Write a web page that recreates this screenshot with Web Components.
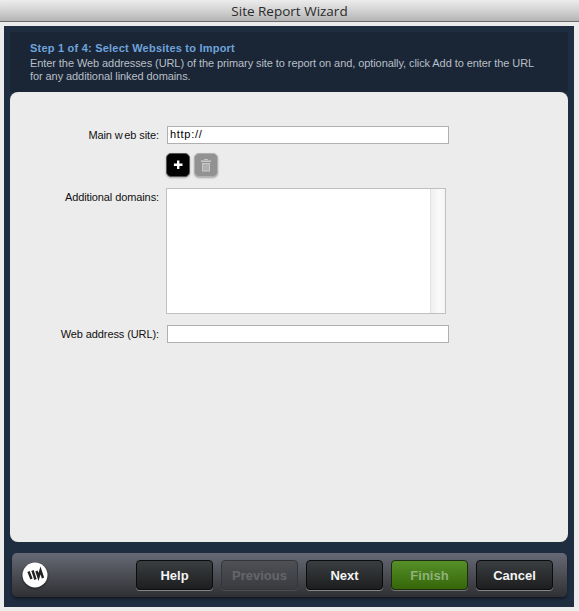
<!DOCTYPE html>
<html>
<head>
<meta charset="utf-8">
<title>Site Report Wizard</title>
<style>
html, body { margin: 0; padding: 0; background: #ececec; }
body { font-family: "Liberation Sans", Arial, sans-serif; font-size: 11px; }
</style>
</head>
<body>
<wizard-window heading="Site Report Wizard">
  <wizard-header slot="header" step="Step 1 of 4: Select Websites to Import">Enter the Web addresses (URL) of the primary site to report on and, optionally, click Add to enter the URL for any additional linked domains.</wizard-header>
  <form-row><span slot="label">Main <span style="letter-spacing:1.6px">w</span>eb site:</span><text-box value="http://"></text-box></form-row>
  <form-row gap="9"><div style="display:flex;gap:4px;margin-left:-1px"><icon-button kind="add"></icon-button><icon-button kind="trash"></icon-button></div></form-row>
  <form-row gap="11"><span slot="label">Additional domains:</span><list-box></list-box></form-row>
  <form-row gap="11"><span slot="label">Web address (URL):</span><text-box></text-box></form-row>
  <wizard-toolbar slot="footer">
    <wizard-logo slot="logo"></wizard-logo>
    <wizard-button>Help</wizard-button>
    <wizard-button disabled>Previous</wizard-button>
    <wizard-button>Next</wizard-button>
    <wizard-button kind="go" disabled>Finish</wizard-button>
    <wizard-button>Cancel</wizard-button>
  </wizard-toolbar>
</wizard-window>

<script>
class WizardWindow extends HTMLElement {
    constructor() {
        super();
        const root = this.attachShadow({ mode: "open" });
        root.innerHTML = `
          <style>
              :host { display: block; width: 579px; height: 611px; overflow: hidden; background: #ececec; }
              .title {
                  height: 21px;
                  border-bottom: 1px solid #6b6b6b;
                  border-radius: 4px 4px 0 0;
                  background: linear-gradient(#ececec, #d8d8d8 40%, #b4b4b4);
                  text-align: center;
                  font: 13.5px/23px "Open Sans", "Liberation Sans", sans-serif;
                  color: #2b2b2b;
              }
              .frame {
                  margin: 4px 5px 0 4px;
                  height: 581px;
                  box-sizing: border-box;
                  padding: 6px 6px 0 6px;
                  background: #1f2d40;
                  display: flex;
                  flex-direction: column;
              }
              .panel {
                  height: 450px;
                  box-sizing: border-box;
                  padding-top: 34px;
                  background: #ececec;
                  border-radius: 8px;
              }
              .foot { margin: 11px 1px 0 2px; }
          </style>
          <div class="title"></div>
          <div class="frame">
              <slot name="header"></slot>
              <div class="panel"><slot></slot></div>
              <div class="foot"><slot name="footer"></slot></div>
          </div>
        `;
        root.querySelector(".title").textContent = this.getAttribute("heading");
    }
}

class WizardHeader extends HTMLElement {
    constructor() {
        super();
        const root = this.attachShadow({ mode: "open" });
        root.innerHTML = `
          <style>
              :host {
                  display: block;
                  height: 60px;
                  box-sizing: border-box;
                  padding: 9px 28px 0 20px;
                  background: #1a2636;
                  font: 11px/13px "Liberation Sans", sans-serif;
                  letter-spacing: -.08px;
                  color: #b9bfc6;
              }
              b { display: block; color: #6fa3dc; line-height: 14px; margin-bottom: 2px; letter-spacing: .22px; }
          </style>
          <b id="step"></b><slot></slot>
        `;
        root.getElementById("step").textContent = this.getAttribute("step");
    }
}

class FormRow extends HTMLElement {
    constructor() {
        super();
        const root = this.attachShadow({ mode: "open" });
        root.innerHTML = `
          <style>
              :host { display: grid; grid-template-columns: 149px auto; column-gap: 8px; justify-content: start; align-items: start; font: 11px/18px "Liberation Sans", sans-serif; color: #111; }
              .label { text-align: right; letter-spacing: -.1px; }
          </style>
          <div class="label"><slot name="label"></slot></div><div><slot></slot></div>
        `;
        if (this.hasAttribute("gap")) this.style.marginTop = this.getAttribute("gap") + "px";
    }
}

class TextBox extends HTMLElement {
    constructor() {
        super();
        const root = this.attachShadow({ mode: "open" });
        root.innerHTML = `
          <style>
              :host {
                  display: block;
                  width: 282px;
                  height: 18px;
                  box-sizing: border-box;
                  border: 1px solid #b0b0b0;
                  background: #fff;
                  padding-left: 2px;
                  font: 11px/15px "Liberation Sans", sans-serif;
                  letter-spacing: .7px;
                  color: #000;
              }
          </style>
          <span></span>
        `;
        root.querySelector("span").textContent = this.getAttribute("value") || "";
    }
}

class ListBox extends HTMLElement {
    constructor() {
        super();
        const root = this.attachShadow({ mode: "open" });
        root.innerHTML = `
          <style>
              :host {
                  display: flex;
                  justify-content: flex-end;
                  width: 280px;
                  height: 126px;
                  margin-left: -1px;
                  box-sizing: border-box;
                  border: 1px solid #c0c0c0;
                  background: #fff;
              }
              .track { width: 14px; border-left: 1px solid #e2e2e2; background: linear-gradient(90deg, #efefef, #fafafa 60%, #f4f4f4); }
          </style>
          <div class="track"></div>
        `;
    }
}

const ICONS = {
    add: `<path d="M7 3.5h2.4v3.1h3.1V9H9.400v3.100H7V9H3.900V6.600H7z" fill="#fff"/>`,
    trash: `<path d="M3 3.500h10v1.500H3zM6.200 2h3.600v1H6.200zM4 6h8v8.500H4z" fill="#c9c9c9"/><path d="M6 7v6.500M8 7v6.500M10 7v6.500" stroke="#969696"/>`
};

class IconButton extends HTMLElement {
    constructor() {
        super();
        const root = this.attachShadow({ mode: "open" });
        const kind = this.getAttribute("kind");
        root.innerHTML = `
          <style>
              :host {
                  display: flex;
                  align-items: center;
                  justify-content: center;
                  width: 24px;
                  height: 24px;
                  box-sizing: border-box;
                  border-radius: 5px;
                  border: 1px solid ${kind === "add" ? "#555" : "#b0b0b0"};
                  background: ${kind === "add" ? "#030303" : "#929292"};
                  box-shadow: 0 1px 2px rgba(0,0,0,.3);
              }
              svg { display: block; }
          </style>
          <svg width="16" height="16" viewBox="0 0 16 16">${ICONS[kind]}</svg>
        `;
    }
}

class WizardToolbar extends HTMLElement {
    constructor() {
        super();
        const root = this.attachShadow({ mode: "open" });
        root.innerHTML = `
          <style>
              :host {
                  display: flex;
                  align-items: center;
                  gap: 8px;
                  height: 44px;
                  box-sizing: border-box;
                  padding: 0 14px 0 10px;
                  border-radius: 5px;
                  background: linear-gradient(#666a75, #4b4d54 50%, #2f3033);
                  box-shadow: 0 2px 3px rgba(0,0,0,.45);
              }
              .logo { margin-right: auto; }
          </style>
          <div class="logo"><slot name="logo"></slot></div><slot></slot>
        `;
    }
}

class WizardLogo extends HTMLElement {
    constructor() {
        super();
        const root = this.attachShadow({ mode: "open" });
        root.innerHTML = `
          <style>
              :host { display: block; width: 26px; height: 26px; filter: drop-shadow(0 1px 1px rgba(0,0,0,.6)); }
              svg { display: block; }
          </style>
          <svg width="26" height="26" viewBox="0 0 26 26">
              <circle cx="13" cy="13" r="12.5" fill="#fff"/>
              <path d="M6.500 9.500 9.500 17M10.500 8.500 13.500 17.500M14.500 9 16.500 15 18.500 8.500 21 16" fill="none" stroke="#222" stroke-width="2.400"/>
          </svg>
        `;
    }
}

class WizardButton extends HTMLElement {
    constructor() {
        super();
        const root = this.attachShadow({ mode: "open" });
        root.innerHTML = `
          <style>
              :host {
                  display: flex;
                  align-items: center;
                  justify-content: center;
                  width: 77px;
                  height: 30px;
                  box-sizing: border-box;
                  border: 1px solid #0c0c0c;
                  border-radius: 4px;
                  background: linear-gradient(#3b3e41, #1c1e1f);
                  box-shadow: 0 1px 0 rgba(255,255,255,.4);
                  font: bold 13px "Liberation Sans", sans-serif;
                  color: #f4f4f4;
              }
              :host([disabled]) { background: linear-gradient(#4e5056, #3a3b3f); border-color: #35363a; box-shadow: 0 1px 0 rgba(255,255,255,.1); color: #64666a; }
              :host([kind="go"]) { background: linear-gradient(#569029, #356609); border-color: #1d2d10; box-shadow: 0 1px 0 rgba(255,255,255,.3); color: #8fb27a; }
          </style>
          <slot></slot>
        `;
    }
}

customElements.define("wizard-window", WizardWindow);
customElements.define("wizard-header", WizardHeader);
customElements.define("form-row", FormRow);
customElements.define("text-box", TextBox);
customElements.define("list-box", ListBox);
customElements.define("icon-button", IconButton);
customElements.define("wizard-toolbar", WizardToolbar);
customElements.define("wizard-logo", WizardLogo);
customElements.define("wizard-button", WizardButton);
</script>
</body>
</html>
